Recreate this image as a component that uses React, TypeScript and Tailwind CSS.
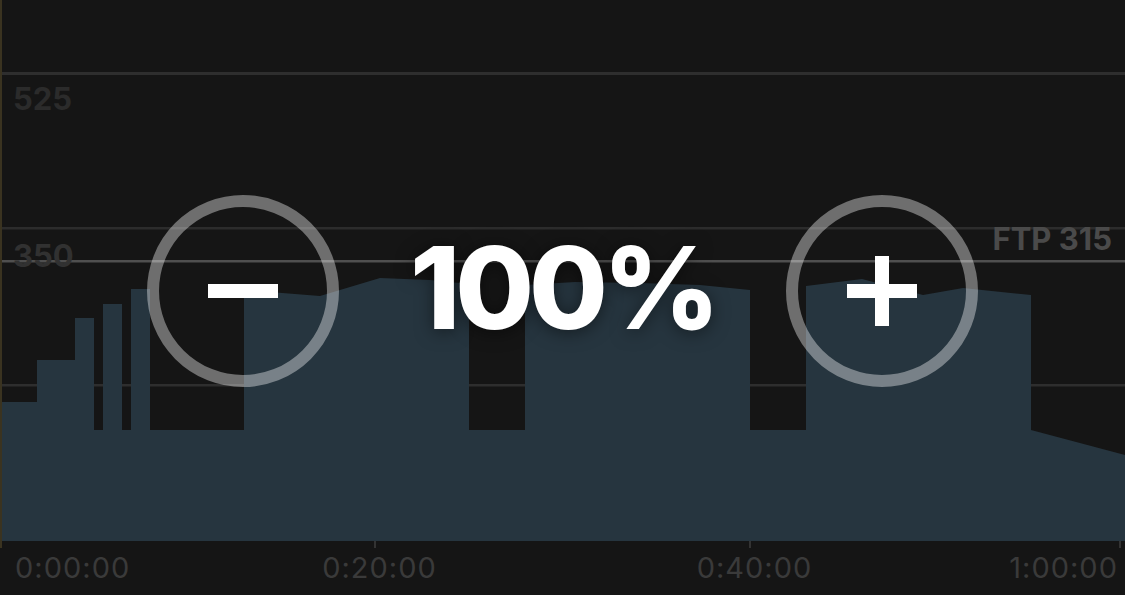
import React from 'react';

const font = { fontFamily: 'Inter, "Noto Sans", sans-serif' };

// workout power profile, in page coordinates (1125 wide, base at 541)
const profile = [
  [2, 541], [2, 402], [37, 402], [37, 360], [75, 360], [75, 318], [94, 318], [94, 430],
  [103, 430], [103, 304], [122, 304], [122, 430], [131, 430], [131, 289], [150, 289], [150, 430],
  [244, 430], [244, 290], [320, 296], [380, 278], [430, 280], [469, 284], [469, 430],
  [525, 430], [525, 285], [575, 282], [640, 283], [700, 285], [750, 290], [750, 430],
  [806, 430], [806, 286], [862, 279], [923, 295], [963, 288], [1031, 295], [1031, 430],
  [1125, 455], [1125, 541],
];

function Chart() {
  return (
    <svg width={1125} height={548} viewBox="0 0 1125 548" className="block">
      <rect x={0} y={72} width={1125} height={3} fill="#2e2e2e" />
      <rect x={0} y={227} width={1125} height={2.5} fill="#2c2c2c" />
      <rect x={0} y={384} width={1125} height={2.5} fill="#2e2e2e" />
      <polygon points={profile.map(p => p.join(',')).join(' ')} fill="#26353f" />
      <rect x={0} y={260} width={1125} height={2.5} fill="#4f4f4f" />
      <rect x={374} y={541} width={2} height={7} fill="#333" />
      <rect x={749} y={541} width={2} height={7} fill="#333" />
      <rect x={1119} y={541} width={2} height={7} fill="#333" />
      <rect x={0} y={0} width={2} height={548} fill="#3a3320" />
    </svg>
  );
}

function RoundButton({ plus }: { plus?: boolean }) {
  return (
    <button className="relative flex h-[192px] w-[192px] items-center justify-center rounded-full border-[12px] border-white/[0.38]">
      <span className="absolute h-[14px] w-[70px] bg-white" />
      {plus && <span className="absolute h-[70px] w-[14px] bg-white" />}
    </button>
  );
}

export default function App() {
  return (
    <div className="relative h-[595px] w-[1125px] overflow-hidden bg-[#151515]" style={font}>
      <div className="relative">
        <Chart />
        <span className="absolute left-[13px] top-[83px] text-[31px] font-bold leading-none text-[#2b2b2b]">525</span>
        <span className="absolute left-[13px] top-[240px] text-[31px] font-bold leading-none text-[#313131]">350</span>
        <span className="absolute right-[13px] top-[223px] text-[31px] font-bold leading-none text-[#4a4a4a]">FTP 315</span>

        <div className="absolute inset-x-0 top-[195px] flex items-center justify-center">
          <RoundButton />
          <div className="w-[447px] pb-[6px] text-center text-[114px] font-extrabold leading-none tracking-[-0.045em] text-white [text-shadow:0_2px_18px_rgba(0,0,0,0.5)]">
            100%
          </div>
          <RoundButton plus />
        </div>
      </div>

      <div className="grid grid-cols-[188px_375px_375px_187px] pt-[5px] text-[29px] leading-none tracking-[0.035em] text-[#3a3a3a]">
        <span className="pl-[15px]">0:00:00</span>
        <span className="pl-[8px] text-center">0:20:00</span>
        <span className="pl-[8px] text-center">0:40:00</span>
        <span className="pr-[7px] text-right">1:00:00</span>
      </div>
    </div>
  );
}
